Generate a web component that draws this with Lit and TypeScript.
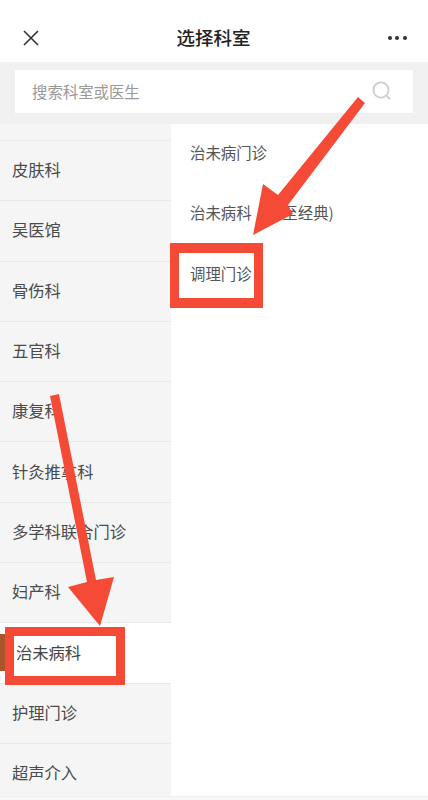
import { LitElement, css, html, svg } from 'lit';
import { customElement, state } from 'lit/decorators.js';
import { classMap } from 'lit/directives/class-map.js';

const DEPARTMENTS = [
  '皮肤科',
  '吴医馆',
  '骨伤科',
  '五官科',
  '康复科',
  '针灸推拿科',
  '多学科联合门诊',
  '妇产科',
  '治未病科',
  '护理门诊',
  '超声介入',
];

const CLINICS = ['治未病门诊', '治未病科（传至经典)', '调理门诊'];

@customElement('app-root')
export class AppRoot extends LitElement {
  @state() selected = '治未病科';

  renderMarks() {
    return svg`
      <path fill-rule="evenodd" d="M170 243H263V308H170ZM179 253V298H254V253Z" />
      <path fill-rule="evenodd" d="M5 627H125V685H5ZM14 636V676H116V636Z" />
      <polygon points="358,97 365,103 288,205 293,214 253,235 263,184 278,195" />
      <polygon points="50,396 59,394 96,580 114,577 100,626 68,587 87,582" />
    `;
  }

  render() {
    return html`
      <div class="page">
        <header class="top-bar">
          <svg class="close" width="18" height="18" viewBox="0 0 18 18">
            <path d="M2 2 16 16M16 2 2 16" />
          </svg>
          <h1 class="title">选择科室</h1>
          <div class="more"><i></i><i></i><i></i></div>
        </header>
        <div class="search-band">
          <div class="search-box">
            <span class="placeholder">搜索科室或医生</span>
            <svg class="search-icon" width="20" height="20" viewBox="0 0 20 20">
              <circle cx="9" cy="9" r="7.6" />
              <path d="M15 15.2 18 18" />
            </svg>
          </div>
        </div>
        <div class="panes">
          <nav class="departments">
            ${DEPARTMENTS.map(
              (name) => html`
                <div class="department ${classMap({ active: name === this.selected })}">
                  ${name}
                </div>
              `,
            )}
          </nav>
          <div class="clinics">
            ${CLINICS.map((name) => html`<div class="clinic">${name}</div>`)}
          </div>
        </div>
        <div class="foot"></div>
        <svg class="marks" width="428" height="800" viewBox="0 0 428 800">
          ${this.renderMarks()}
        </svg>
      </div>
    `;
  }

  static styles = css`
    :host {
      display: block;
      font-family: 'Noto Sans CJK SC', 'Liberation Sans', sans-serif;
      color: #4a4a4a;
    }
    .page {
      position: relative;
      display: flex;
      flex-direction: column;
      height: 800px;
      overflow: hidden;
      background: #fff;
    }
    .top-bar {
      flex: none;
      display: grid;
      grid-template-columns: 1fr auto 1fr;
      align-items: center;
      height: 62px;
      padding: 14px 21px 0 22px;
      box-sizing: border-box;
      background: #fff;
    }
    .close {
      fill: none;
      stroke: #333;
      stroke-width: 1.6;
    }
    .title {
      margin: 0 2px 3px 0;
      font-size: 18.5px;
      line-height: 24px;
      font-weight: 500;
      color: #222;
    }
    .more {
      justify-self: end;
      display: flex;
      gap: 3.6px;
    }
    .more i {
      width: 4px;
      height: 4px;
      border-radius: 50%;
      background: #333;
    }
    .search-band {
      flex: none;
      height: 62px;
      padding: 8px 15px 0;
      box-sizing: border-box;
      background: #f0f0f0;
    }
    .search-box {
      display: flex;
      align-items: center;
      justify-content: space-between;
      height: 43px;
      padding: 0 21px 2px 17px;
      box-sizing: border-box;
      background: #fff;
    }
    .placeholder {
      font-size: 15.4px;
      color: #999;
    }
    .search-icon {
      fill: none;
      stroke: #ccc;
      stroke-width: 1.8;
    }
    .panes {
      flex: 1;
      min-height: 0;
      display: flex;
    }
    .departments {
      flex: none;
      width: 171px;
      padding-top: 16px;
      box-sizing: border-box;
      overflow: hidden;
      background: #f5f5f5;
    }
    .department {
      position: relative;
      display: flex;
      align-items: center;
      height: 60.3px;
      padding: 0 0 3px 12px;
      box-sizing: border-box;
      border-top: 1px solid #e8e8e8;
      font-size: 16.3px;
      color: #4a4a4a;
    }
    .department.active {
      padding-left: 16px;
      background: #fff;
      color: #444;
    }
    .department.active::before {
      content: '';
      position: absolute;
      left: 0;
      top: 11px;
      width: 5px;
      height: 37px;
      background: #a8562a;
    }
    .clinics {
      flex: 1;
      background: #fff;
    }
    .clinic {
      display: flex;
      align-items: center;
      height: 60.3px;
      padding: 0 0 4px 19px;
      box-sizing: border-box;
      font-size: 15.4px;
      color: #555;
    }
    .foot {
      flex: none;
      height: 4px;
      border-top: 1px solid #eee;
      box-sizing: border-box;
      background: #f7f7f7;
    }
    .marks {
      position: absolute;
      left: 0;
      top: 0;
      fill: #f44a36;
      pointer-events: none;
    }
  `;
}

declare global {
  interface HTMLElementTagNameMap {
    'app-root': AppRoot;
  }
}
